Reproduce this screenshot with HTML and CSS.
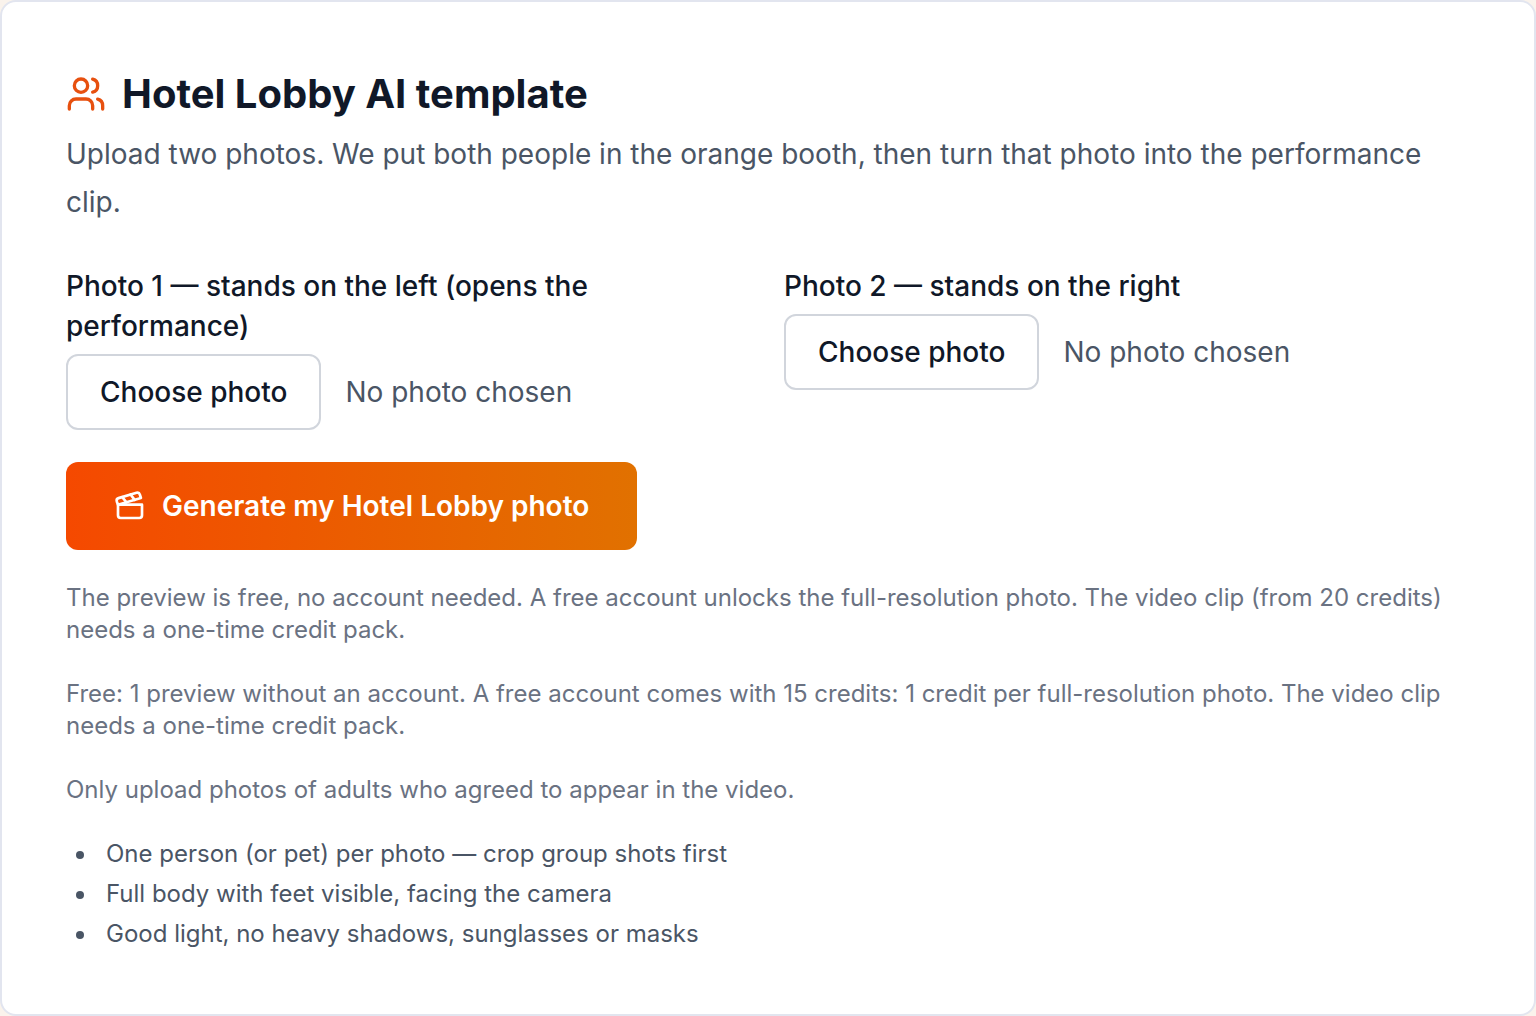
FILE: index.html
```html
<!DOCTYPE html>
<html lang="en">
<head>
    <meta charset="UTF-8">
    <meta name="viewport" content="width=device-width, initial-scale=1.0">
    <title>Hotel Lobby AI template</title>
    <link rel="stylesheet" href="styles.css">
</head>
<body>
    <main class="card">
        <header class="card-header">
            <h1 class="title">
                <svg class="title-icon" viewBox="0 0 24 24" aria-hidden="true">
                    <path d="M16 21v-2a4 4 0 0 0-4-4H6a4 4 0 0 0-4 4v2"/>
                    <circle cx="9" cy="7" r="4"/>
                    <path d="M22 21v-2a4 4 0 0 0-3-3.87"/>
                    <path d="M16 3.13a4 4 0 0 1 0 7.75"/>
                </svg>
                Hotel Lobby AI template
            </h1>
            <p class="lead">Upload two photos. We put both people in the orange booth, then turn that photo into the performance clip.</p>
        </header>
        <form class="form">
            <div class="photos">
                <div class="photo">
                    <label class="photo-label" for="photo_1">Photo 1 — stands on the left (opens the performance)</label>
                    <div class="picker">
                        <button type="button" class="choose" id="photo_1">Choose photo</button>
                        <span class="file-name">No photo chosen</span>
                    </div>
                </div>
                <div class="photo">
                    <label class="photo-label" for="photo_2">Photo 2 — stands on the right</label>
                    <div class="picker">
                        <button type="button" class="choose" id="photo_2">Choose photo</button>
                        <span class="file-name">No photo chosen</span>
                    </div>
                </div>
            </div>
            <button type="button" class="generate">
                <svg class="generate-icon" viewBox="0 0 24 24" aria-hidden="true">
                    <path d="M20.2 6 3 11l-.9-2.4c-.3-1.1.3-2.2 1.3-2.5l13.5-4c1.1-.3 2.2.3 2.5 1.3Z"/>
                    <path d="m6.2 5.3 3.1 3.9"/>
                    <path d="m12.4 3.4 3.1 4"/>
                    <path d="M3 11h18v8a2 2 0 0 1-2 2H5a2 2 0 0 1-2-2Z"/>
                </svg>
                Generate my Hotel Lobby photo
            </button>
            <p class="note">The preview is free, no account needed. A free account unlocks the full-resolution photo. The video clip (from 20 credits) needs a one-time credit pack.</p>
            <p class="note">Free: 1 preview without an account. A free account comes with 15 credits: 1 credit per full-resolution photo. The video clip needs a one-time credit pack.</p>
            <p class="note">Only upload photos of adults who agreed to appear in the video.</p>
            <ul class="tips">
                <li>One person (or pet) per photo — crop group shots first</li>
                <li>Full body with feet visible, facing the camera</li>
                <li>Good light, no heavy shadows, sunglasses or masks</li>
            </ul>
        </form>
    </main>
</body>
</html>
```
FILE: styles.css
```css
* {
    box-sizing: border-box;
    margin: 0;
    padding: 0;
}
body {
    background-color: #faf3ec;
    font-family: Inter, "Liberation Sans", sans-serif;
    color: #101828;
}
.card {
    min-height: 100vh;
    padding: 64px;
    border: 2px solid #e2e5ef;
    border-radius: 16px;
    background-color: #fff;
}
.card-header {
    margin-bottom: 40px;
}
.title {
    display: flex;
    align-items: center;
    gap: 16px;
    font-size: 40px;
    line-height: 56px;
    font-weight: 700;
}
.title-icon,
.generate-icon {
    flex: none;
    fill: none;
    stroke: currentColor;
    stroke-width: 2;
    stroke-linecap: round;
    stroke-linejoin: round;
}
.title-icon {
    width: 40px;
    height: 40px;
    color: #e7500f;
}
.lead {
    margin-top: 8px;
    font-size: 28px;
    line-height: 48px;
    color: #4a5565;
}
.form {
    display: flex;
    flex-direction: column;
    align-items: flex-start;
    gap: 32px;
}
.photos {
    display: grid;
    grid-template-columns: repeat(2, 1fr);
    gap: 32px;
    width: 100%;
}
.photo-label {
    display: block;
    margin-bottom: 8px;
    font-size: 28px;
    line-height: 40px;
    font-weight: 500;
}
.picker {
    display: flex;
    align-items: center;
    gap: 24px;
}
.choose {
    height: 76px;
    padding: 0 32px;
    border: 2px solid #d1d5dc;
    border-radius: 12px;
    background-color: #fff;
    font: 500 28px/40px Inter, "Liberation Sans", sans-serif;
    color: #101828;
}
.file-name {
    font-size: 28px;
    line-height: 40px;
    color: #4a5565;
}
.generate {
    display: flex;
    align-items: center;
    gap: 16px;
    height: 88px;
    padding: 0 48px;
    border: none;
    border-radius: 12px;
    background: linear-gradient(to right, #f54900, #e17100);
    font: 600 28px/40px Inter, "Liberation Sans", sans-serif;
    color: #fff;
}
.generate-icon {
    width: 32px;
    height: 32px;
}
.note {
    font-size: 24px;
    line-height: 32px;
    color: #6a7282;
}
.tips {
    display: flex;
    flex-direction: column;
    gap: 8px;
    padding-left: 32px;
    font-size: 24px;
    line-height: 32px;
    color: #4a5565;
}
.tips li {
    padding-left: 8px;
}
```
